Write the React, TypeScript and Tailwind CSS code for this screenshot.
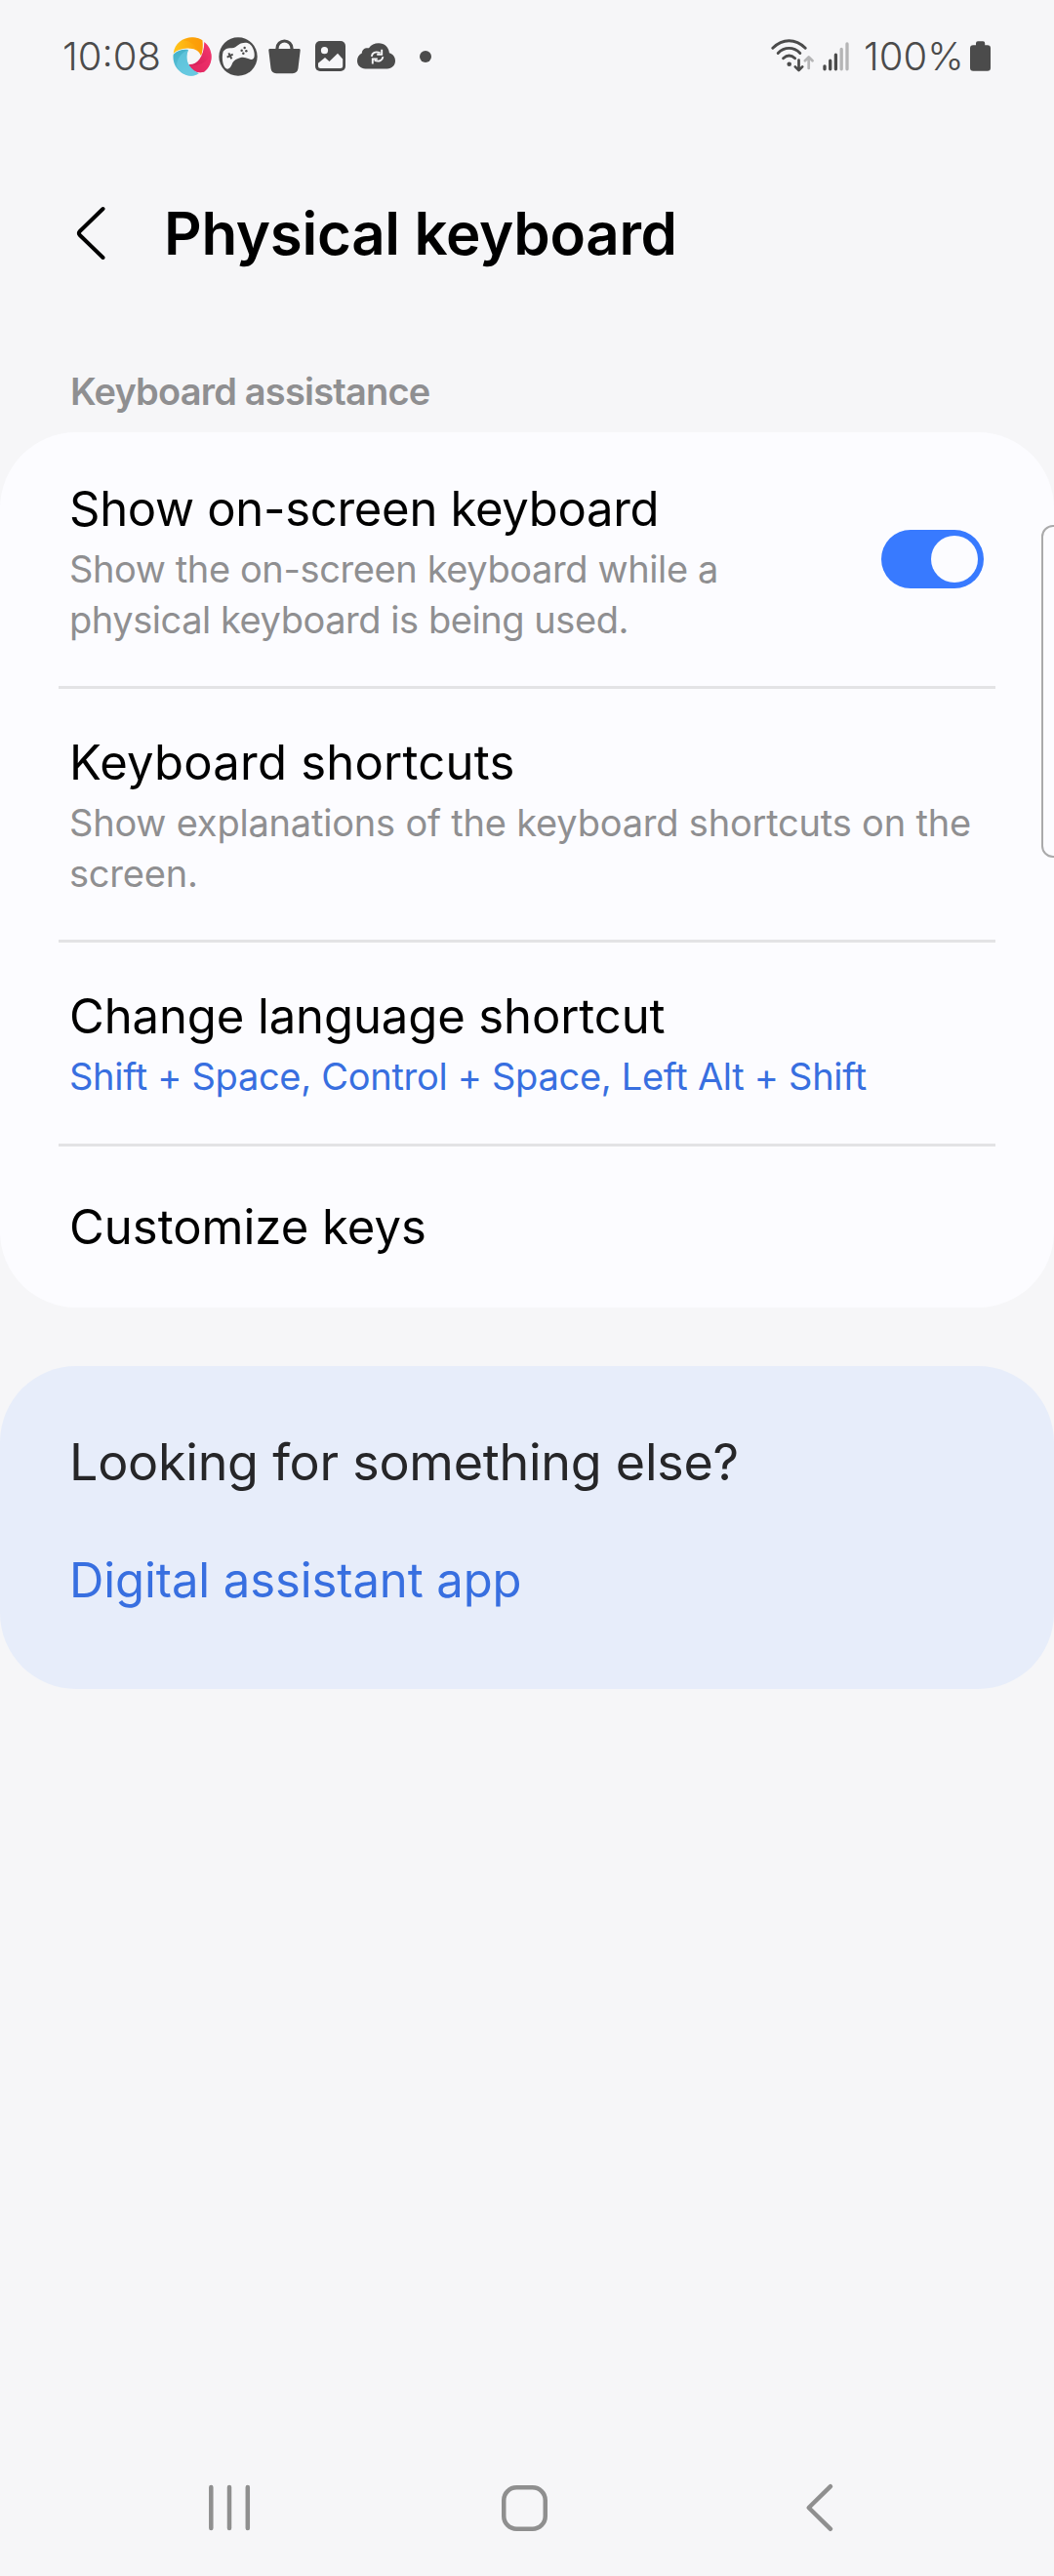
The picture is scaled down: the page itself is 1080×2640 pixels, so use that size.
import type { ReactNode } from "react";

const INK = "#4b4b4b";

function PinwheelIcon() {
  return (
    <svg width="40" height="40" viewBox="0 0 120 120" className="shrink-0">
      <defs>
        <linearGradient id="pinYellow" x1="0" x2="1">
          <stop offset="0" stopColor="#ffc61a" />
          <stop offset="1" stopColor="#fb9708" />
        </linearGradient>
        <linearGradient id="pinRed" x1="1" y1="0" x2="0.2" y2="1">
          <stop offset="0" stopColor="#f93a70" />
          <stop offset="1" stopColor="#cf1a56" />
        </linearGradient>
        <linearGradient id="pinBlue" x1="0" y1="0" x2="0.4" y2="1">
          <stop offset="0" stopColor="#41afc6" />
          <stop offset="1" stopColor="#62c6de" />
        </linearGradient>
      </defs>
      <path d="M2 50C6 20 30 1 60 1c12 0 22 3 31 9 2 18 1 34-4 47C81 43 68 34 52 35 30 33 14 40 2 50Z" fill="url(#pinYellow)" />
      <path d="M32 10c24 2 44 18 55 47 5-13 6-29 4-47C73-2 49-1 32 10Z" fill="#fb9d08" opacity=".55" />
      <path d="M97 15c14 11 22 27 22 45 0 20-9 37-23 47-15 4-32 0-46-15-1-3-1-5 0-8 22 2 46-20 47-69Z" fill="url(#pinRed)" />
      <path d="M118 50C106 78 78 92 50 84c-1 3-1 5 0 8 14 15 31 19 46 15 16-12 25-32 22-57Z" fill="#f0326b" opacity=".55" />
      <path d="M2 53c12-12 30-17 46-14-11 27-4 54 32 73-7 5-14 7-21 7C25 119-3 88 2 53Z" fill="url(#pinBlue)" />
      <path d="M12 88C14 65 26 48 48 39c-11 27-4 54 32 73-7 5-14 7-21 7-21 0-38-11-47-31Z" fill="#6acbe2" opacity=".6" />
    </svg>
  );
}

function GamepadIcon() {
  return (
    <svg width="40" height="40" viewBox="0 0 120 120" className="shrink-0">
      <circle cx="60" cy="60" r="59" fill={INK} />
      <path
        d="M14 44c7-9 17-12 27-10 8 0 13-6 21-11 10-6 24-8 33-2 10 7 16 24 15 36 0 11-8 14-17 10-9-3-17-7-25-4-12 3-20 8-25 16-4 10-8 19-16 19C13 98 8 63 14 44Z"
        fill="#f6f6f8"
      />
      <path d="M26 62l18-9M31 49l9 18" stroke={INK} strokeWidth="6" fill="none" />
      <g fill={INK}>
        <circle cx="71" cy="41" r="3.7" />
        <circle cx="80" cy="33" r="3.7" />
        <circle cx="85" cy="43" r="3.7" />
        <circle cx="76" cy="50" r="3.7" />
      </g>
    </svg>
  );
}

function BagIcon() {
  return (
    <svg width="33" height="36" viewBox="0 0 33 36" className="shrink-0">
      <path d="M9 13V9.5a7.5 7.5 0 0 1 15 0V13" stroke={INK} strokeWidth="3.2" fill="none" />
      <path d="M1.6 10h29.8c.9 0 1.4.6 1.3 1.5L30.5 30c-.4 3.4-2.4 5.2-5.6 5.2H8.1c-3.2 0-5.2-1.8-5.6-5.2L.3 11.5C.2 10.6.7 10 1.6 10Z" fill={INK} />
    </svg>
  );
}

function ImageIcon() {
  return (
    <svg width="31" height="31" viewBox="0 0 31 31" className="shrink-0">
      <rect width="31" height="31" rx="5" fill={INK} />
      <circle cx="9.5" cy="9.7" r="3.6" fill="#f6f6f8" />
      <path d="M3 22.8 10 17l4.5 4L23 12.8l5.2 5.6v7.1q0 2.5-2.5 2.5H5.5Q3 28 3 25.5Z" fill="#f6f6f8" />
    </svg>
  );
}

function CloudSyncIcon() {
  return (
    <svg width="39" height="27" viewBox="0 0 39 27" className="shrink-0">
      <path d="M8.5 26.5C3.500 26.500 0 23 0 18.300c0-3.600 2-6.500 4.800-7.700.2-4 3-6 7.200-5.300C14.200 2 17.800.3 22 .3c6 0 10.400 4 10.900 10 3.800 1.200 6.100 4.300 6.100 8 0 4.700-3.400 8.200-8.300 8.200Z" fill={INK} />
      <g stroke="#f6f6f8" strokeWidth="1.9" fill="none">
        <path d="M14.8 13.800C15.2 10.200 18.500 8.200 23.500 10.200" />
        <path d="M25.200 6.800v4.900h-5" />
        <path d="M26.400 14.200c-.4 3.600-3.800 5.600-8.700 3.700" />
        <path d="M15.800 21.400v-4.900h5" />
      </g>
    </svg>
  );
}

function WifiIcon() {
  return (
    <svg width="44" height="35" viewBox="0 0 44 35" className="shrink-0">
      <g stroke={INK} strokeWidth="2.9" fill="none" strokeLinecap="round">
        <path d="M1.800 9.200C12-.8 25-.8 35.200 9.200" />
        <path d="M7.200 14.400c6.600-6.700 16-6.700 22.600 0" />
        <path d="M12.600 19.700c3.800-3.500 8.200-3.500 12 0" />
      </g>
      <circle cx="18.700" cy="25.700" r="2.300" fill={INK} />
      <path d="M28.500 21.500v10M24.800 28.400l3.700 3.700 3.700-3.700" stroke={INK} strokeWidth="2.700" fill="none" strokeLinecap="round" strokeLinejoin="round" />
      <path d="M38.700 30v-9.500M34.900 22.200l3.800-3.800 3.800 3.800" stroke="#b5b5b6" strokeWidth="2.700" fill="none" strokeLinecap="round" strokeLinejoin="round" />
    </svg>
  );
}

function SignalIcon() {
  return (
    <svg width="28" height="30" viewBox="0 0 28 30" className="shrink-0">
      <g strokeWidth="3.300" strokeLinecap="round" fill="none">
        <path d="M2 24.800v3M7.700 19.200v8.600M13.400 13.200v14.600" stroke={INK} />
        <path d="M19.200 7.400v20.400M25 2v25.800" stroke="#b5b5b6" />
      </g>
    </svg>
  );
}

function BatteryIcon() {
  return (
    <svg width="21" height="31" viewBox="0 0 21 31" className="shrink-0">
      <path d="M6 2.300Q6 .2 8 .2h5.200q2 0 2 2.100v1.900h2.600Q21 4.200 21 7.400v20.200q0 3.200-3.200 3.200H3.200Q0 30.800 0 27.600V7.400q0-3.200 3.200-3.200H6Z" fill={INK} />
    </svg>
  );
}

function StatusBar() {
  return (
    <header className="flex h-[115px] items-center pr-[65px] pl-[64px] text-[40px] leading-[52px] font-[350] text-[#4b4b4b]">
      <span className="w-[113px] shrink-0 whitespace-nowrap">10:08</span>
      <PinwheelIcon />
      <div className="ml-[7px] flex"><GamepadIcon /></div>
      <div className="ml-[11px] flex"><BagIcon /></div>
      <div className="ml-[15px] flex"><ImageIcon /></div>
      <div className="ml-[12px] mb-px flex"><CloudSyncIcon /></div>
      <span className="ml-[25px] size-[12px] rounded-full bg-[#4b4b4b]" />
      <div className="ml-auto flex items-center">
        <WifiIcon />
        <div className="ml-[9px] flex"><SignalIcon /></div>
        <span className="ml-[14px] w-[109px] whitespace-nowrap">100%</span>
        <BatteryIcon />
      </div>
    </header>
  );
}

function Divider() {
  return <div className="mx-[60px] h-[3px] bg-[#e3e3e5]" />;
}

function RowTitle({ children }: { children: ReactNode }) {
  return <h2 className="text-[49px] leading-[60px] whitespace-nowrap text-black">{children}</h2>;
}

export default function App() {
  return (
    <div className="relative flex h-[2640px] w-[1080px] flex-col overflow-hidden bg-[#f6f6f8] font-['Inter',sans-serif]">
      <StatusBar />

      <div className="mt-[84px] flex h-[80px] items-center pl-[77px]">
        <svg width="32" height="56" viewBox="0 0 32 56" className="shrink-0">
          <path d="M28.500 3 4.800 26q-2 2 0 4l23.700 23" stroke="#000" strokeWidth="4" fill="none" strokeLinecap="round" strokeLinejoin="round" />
        </svg>
        <h1 className="ml-[59px] text-[60px] leading-[80px] font-semibold tracking-[-0.3px] whitespace-nowrap text-black">Physical keyboard</h1>
      </div>

      <p className="mt-[96px] mb-[16px] pl-[72px] text-[38px] leading-[52px] font-semibold tracking-[-0.8px] text-[#8f8f91]">
        Keyboard assistance
      </p>

      <main className="h-[897px] shrink-0 rounded-[78px] bg-[#fcfcff]">
        <section className="flex h-[260px] items-start justify-between pt-[49px] pr-[72px] pl-[71px]">
          <div>
            <div className="tracking-[-0.3px]"><RowTitle>Show on-screen keyboard</RowTitle></div>
            <p className="mt-[5px] text-[38px] leading-[52px] tracking-[-0.39px] whitespace-nowrap text-[#8f8f91]">
              Show the on-screen keyboard while a<br />
              <span className="tracking-[-0.45px]">physical keyboard is being used.</span>
            </p>
          </div>
          <button role="switch" aria-checked="true" className="mt-[51px] flex h-[60px] w-[105px] items-center justify-end rounded-full bg-[#387aff] pr-[6px]">
            <span className="size-[48px] rounded-full bg-[#fcfcff]" />
          </button>
        </section>
        <Divider />
        <section className="h-[257px] pt-[46px] pl-[71px]">
          <div className="tracking-[0.22px]"><RowTitle>Keyboard shortcuts</RowTitle></div>
          <p className="mt-[5px] text-[38px] leading-[52px] tracking-[-0.2px] whitespace-nowrap text-[#8f8f91]">
            Show explanations of the keyboard shortcuts on the<br />screen.
          </p>
        </section>
        <Divider />
        <section className="h-[206px] pt-[46px] pl-[71px]">
          <div className="tracking-[-0.1px]"><RowTitle>Change language shortcut</RowTitle></div>
          <p className="mt-[5px] text-[38px] leading-[52px] tracking-[-0.29px] whitespace-nowrap text-[#386fe0]">
            Shift + Space, Control + Space, Left Alt + Shift
          </p>
        </section>
        <Divider />
        <section className="pt-[53px] pl-[71px]">
          <RowTitle>Customize keys</RowTitle>
        </section>
      </main>

      <aside className="mt-[60px] h-[331px] shrink-0 rounded-[78px] bg-[#e7edfa] pt-[67px] pl-[71px]">
        <h2 className="text-[52px] leading-[64px] tracking-[-0.25px] text-[#262628]">Looking for something else?</h2>
        <a className="mt-[59px] block text-[49px] leading-[60px] tracking-[-0.1px] text-[#386fe0]">Digital assistant app</a>
      </aside>

      <nav className="mt-auto flex h-[140px] items-center pl-[213px]">
        <svg width="44" height="50" viewBox="0 0 44 50">
          <path d="M3.300 4v42M22 4v42M40.800 4v42" stroke="#8f8f8f" strokeWidth="4.500" strokeLinecap="round" />
        </svg>
        <svg width="47" height="47" viewBox="0 0 47 47" className="ml-[257px]">
          <rect x="2.250" y="2.250" width="42.500" height="42.500" rx="13" stroke="#8f8f8f" strokeWidth="4.500" fill="none" />
        </svg>
        <svg width="32" height="52" viewBox="0 0 32 52" className="ml-[263px]">
          <path d="M27 4.200 4.700 26 27 47.800" stroke="#8f8f8f" strokeWidth="4.500" fill="none" strokeLinecap="round" strokeLinejoin="round" />
        </svg>
      </nav>

      {/* Edge panel handle overlapping the settings card */}
      <div className="absolute top-[538px] -right-[20px] h-[341px] w-[33px] rounded-[12px] border-2 border-[#aaaaab] bg-[#fcfcff]" />
    </div>
  );
}
